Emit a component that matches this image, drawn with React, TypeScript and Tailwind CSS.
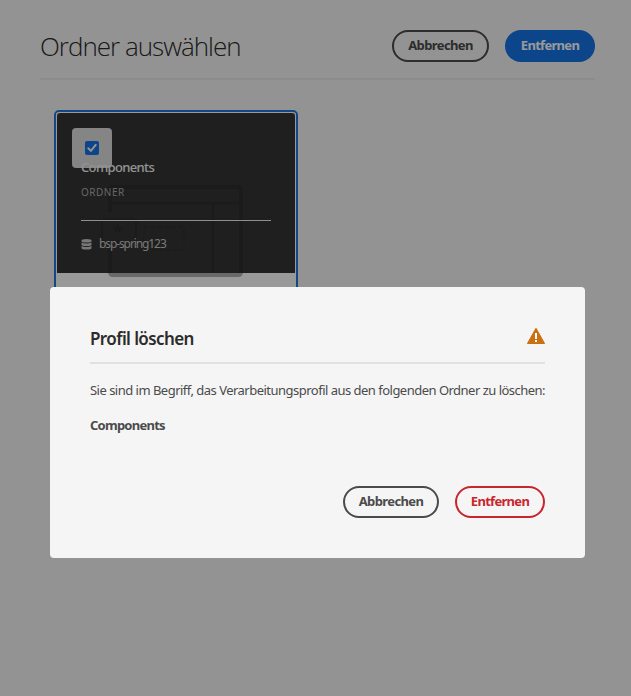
import React from "react";

const font = "font-['Noto_Sans','Open_Sans',sans-serif]";

function PageHeader() {
  return (
    <header className="flex h-[50px] items-start justify-between border-b-2 border-[#eaeaea]">
      <h1 className="mt-[-2px] font-['Open_Sans',sans-serif] text-[26px] font-light leading-9 tracking-[-1px] whitespace-nowrap text-[#2c2c2c]">
        Ordner auswählen
      </h1>
      <div className="flex gap-4">
        <button className="h-8 w-[97px] rounded-full border-2 border-[#4b4b4b] text-[13px] font-bold tracking-[-0.6px] text-[#4b4b4b]">
          Abbrechen
        </button>
        <button className="h-8 w-[90px] rounded-full bg-[#1473e6] text-[13px] font-bold tracking-[-0.7px] text-white">
          Entfernen
        </button>
      </div>
    </header>
  );
}

function LayoutArt() {
  return (
    <svg className="absolute left-[44px] top-[73px]" width="146" height="94" viewBox="100 186 146 94" fill="none">
      <g stroke="#b0b0b0" strokeWidth="4">
        <path d="M110 213V191Q110 188 113 188H238Q241 188 241 191V273Q241 276 238 276H113Q110 276 110 273V244" />
        <path d="M111 204H241M213 204V275" strokeWidth="2.500" />
        <rect x="102" y="220" width="34" height="23" rx="3" strokeWidth="2" />
        <rect x="144" y="228" width="40" height="23" strokeWidth="1.500" strokeDasharray="4 3" />
      </g>
      <path d="m118 224 1.700 4h4.300l-3.300 2.600 1.200 4.200-3.900-2.500-3.900 2.500 1.200-4.200-3.300-2.600h4.300z" fill="#b0b0b0" />
    </svg>
  );
}

function FolderCard() {
  return (
    <article className="relative mt-[30px] ml-[14px] h-[250px] w-[244px] rounded-[5px] border-2 border-[#1f78e0] bg-white p-px">
      <LayoutArt />
      <div className="relative h-[160px] rounded-t-[3px] bg-[#1f1f1f]/90 px-6 pt-[45px]">
        <div className="absolute left-[15px] top-[15px] flex size-10 items-center justify-center rounded bg-[#dedede]">
          <svg width="14" height="14" viewBox="0 0 14 14">
            <rect width="14" height="14" rx="2" fill="#1473e6" />
            <path d="m3.300 7.200 2.600 2.700 4.800-6" fill="none" stroke="#f5f5f5" strokeWidth="2" strokeLinecap="round" strokeLinejoin="round" />
          </svg>
        </div>
        <p className="relative text-[13px] leading-[18px] font-medium tracking-[-0.65px] text-[#f5f5f5]">Components</p>
        <p className="mt-[8px] text-[10px] leading-4 tracking-[0.5px] text-[#aaaaaa]">ORDNER</p>
        <hr className="mt-[20px] border-[#eeeeee]" />
        <div className="mt-[15px] flex items-center gap-[7px] text-[12px] leading-4 tracking-[-1.1px] text-[#c8c8c8]">
          <svg width="11" height="11" viewBox="0 0 11 11" fill="currentColor">
            <path d="M.5 1.500Q.5 0 5.500 0t5 1.500v.8Q10.500 3.500 5.500 3.500T.5 2.300zM.5 3.600q1.500.9 5 .9t5-.9v2.100q0 1.300-5 1.300t-5-1.300zM.5 7.100q1.500.9 5 .9t5-.9v1.800q0 1.500-5 1.500t-5-1.500z" />
          </svg>
          <span>bsp-spring123</span>
        </div>
      </div>
    </article>
  );
}

function DeleteDialog() {
  return (
    <section role="dialog" className="absolute left-[50px] top-[287px] h-[271px] w-[535px] rounded bg-[#f5f5f5] px-10 pt-10">
      <div className="flex h-[37px] items-start justify-between border-b-2 border-[#e1e1e1]">
        <h2 className="text-[17px] leading-6 font-semibold tracking-[-0.6px] text-[#2c2c2c]">Profil löschen</h2>
        <svg className="mt-px" width="18" height="16" viewBox="0 0 18 16">
          <path d="M8.300.5Q9-.4 9.700.5L17.800 15q.4 1-.6 1H.8q-1 0-.6-1z" fill="#cb6f10" />
          <path d="M8 5h2v6H8zM8 12h2v2H8z" fill="#fff" />
        </svg>
      </div>
      <p className="mt-[14px] text-[13px] leading-6 tracking-[-0.515px] whitespace-nowrap text-[#4b4b4b]">
        Sie sind im Begriff, das Verarbeitungsprofil aus den folgenden Ordner zu löschen:
      </p>
      <p className="mt-[11px] text-[13px] leading-6 font-bold tracking-[-0.75px] text-[#4b4b4b]">Components</p>
      <div className="mt-[49px] flex justify-end gap-4">
        <button className="h-8 w-24 rounded-full border-2 border-[#4b4b4b] text-[13px] font-bold tracking-[-0.6px] text-[#4b4b4b]">
          Abbrechen
        </button>
        <button className="h-8 w-[90px] rounded-full border-2 border-[#c9252d] text-[13px] font-bold tracking-[-0.7px] text-[#c9252d]">
          Entfernen
        </button>
      </div>
    </section>
  );
}

export default function App() {
  return (
    <div className={`relative h-[696px] w-[631px] overflow-hidden bg-[#f5f5f5] ${font}`}>
      <main className="pt-[30px] pr-9 pl-10">
        <PageHeader />
        <FolderCard />
      </main>
      <div className="absolute inset-0 bg-black/40" />
      <DeleteDialog />
    </div>
  );
}
